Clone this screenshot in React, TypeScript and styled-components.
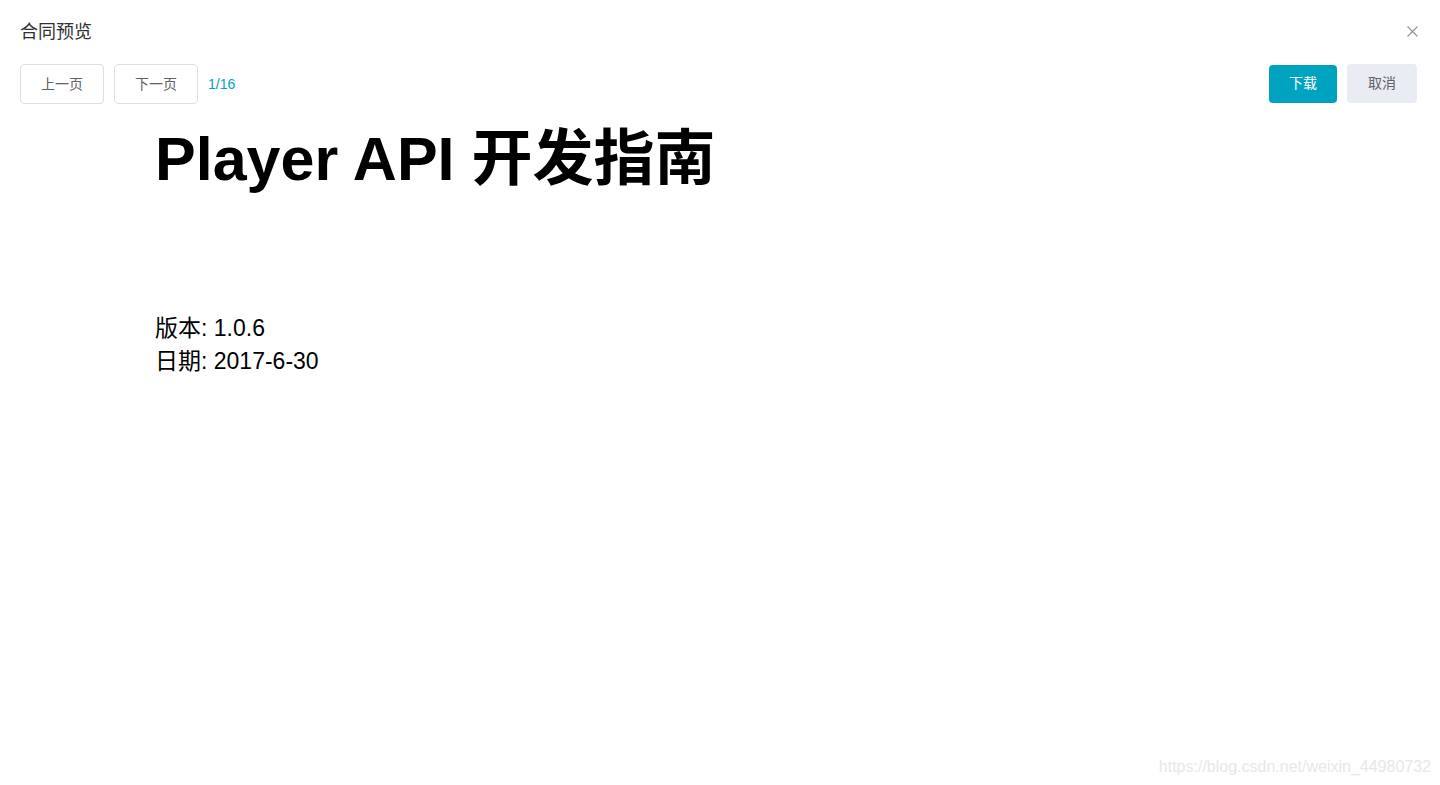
import React from "react";
import styled, { createGlobalStyle } from "styled-components";

const Global = createGlobalStyle`
  html, body { margin: 0; padding: 0; background: #fff; }
  body { font-family: "Liberation Sans", Arial, "Noto Sans CJK SC", sans-serif; }
  * { box-sizing: border-box; }
`;

const Page = styled.div`
  width: 1440px;
  height: 785px;
  position: relative;
  overflow: hidden;
  background: #fff;
  padding: 21px 23px 0 20px;
  display: flex;
  flex-direction: column;
`;

const Header = styled.div`
  display: flex;
  align-items: center;
  justify-content: space-between;
  height: 22px;
`;

const Title = styled.div`
  font-family: "Liberation Sans", "Noto Sans CJK SC", sans-serif;
  font-size: 18px;
  line-height: 22px;
  color: #303133;
`;

const Close = styled.button`
  border: 0;
  background: transparent;
  padding: 0;
  width: 12px;
  height: 12px;
  margin-right: -1px;
  margin-top: -2px;
  cursor: pointer;
  display: flex;
  align-items: center;
  justify-content: center;
`;

const Toolbar = styled.div`
  margin-top: 21px;
  display: flex;
  justify-content: space-between;
  align-items: flex-start;
`;

const Group = styled.div`
  display: flex;
  align-items: center;
  gap: 10px;
`;

const Button = styled.button<{ $variant?: "default" | "primary" | "muted"; $w: number; $h: number }>`
  width: ${(p) => p.$w}px;
  height: ${(p) => p.$h}px;
  border-radius: 4px;
  font-family: "Liberation Sans", "Noto Sans CJK SC", sans-serif;
  font-size: 14px;
  padding: 0 0 3px;
  cursor: pointer;
  border: ${(p) => (p.$variant === "default" ? "1px solid #dcdfe6" : "0")};
  background: ${(p) =>
    p.$variant === "primary" ? "#00a3bf" : p.$variant === "muted" ? "#e9ecf3" : "#fff"};
  color: ${(p) => (p.$variant === "primary" ? "#fff" : "#606266")};
`;

const PageNum = styled.span`
  font-family: "Liberation Sans", sans-serif;
  font-size: 14px;
  color: #00a3bf;
`;

const Doc = styled.div`
  margin-top: 20px;
  padding-left: 135px;
  color: #000;
`;

const Heading = styled.h1`
  margin: 0;
  font-family: "Liberation Sans", Arial, "Noto Sans CJK SC", sans-serif;
  font-weight: 700;
  font-size: 61px;
  line-height: 70px;
`;

const Meta = styled.div`
  margin-top: 118px;
  font-family: "Liberation Sans", Arial, "Noto Sans CJK SC", sans-serif;
  font-size: 23px;
  line-height: 33px;
`;

const Watermark = styled.div`
  position: absolute;
  right: 9px;
  bottom: 9px;
  font-family: "Liberation Sans", Arial, sans-serif;
  font-size: 16px;
  color: #e8e8e8;
`;

export default function App() {
  return (
    <>
      <Global />
      <Page>
        <Header>
          <Title>合同预览</Title>
          <Close aria-label="close">
            <svg width="11" height="11" viewBox="0 0 11 11">
              <path d="M0.5 0.5 L10.5 10.5 M10.5 0.5 L0.5 10.5" stroke="#909399" strokeWidth="1.1" fill="none" />
            </svg>
          </Close>
        </Header>
        <Toolbar>
          <Group>
            <Button $variant="default" $w={84} $h={40}>上一页</Button>
            <Button $variant="default" $w={84} $h={40}>下一页</Button>
            <PageNum>1/16</PageNum>
          </Group>
          <Group>
            <Button $variant="primary" $w={68} $h={38}>下载</Button>
            <Button $variant="muted" $w={70} $h={39}>取消</Button>
          </Group>
        </Toolbar>
        <Doc>
          <Heading>Player API 开发指南</Heading>
          <Meta>
            <div>版本: 1.0.6</div>
            <div>日期: 2017-6-30</div>
          </Meta>
        </Doc>
        <Watermark>https://blog.csdn.net/weixin_44980732</Watermark>
      </Page>
    </>
  );
}
